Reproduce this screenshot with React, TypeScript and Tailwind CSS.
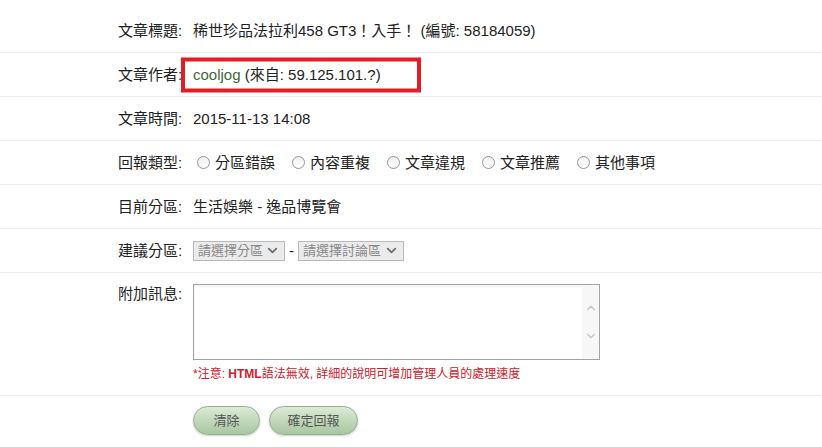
import React from "react";
import { ChevronDown, ChevronUp } from "lucide-react";

const font = "font-['Liberation_Sans','Noto_Sans_CJK_TC',sans-serif]";

const Row = ({
  label,
  children,
  top = false,
  className = "",
}: {
  label: string;
  children: React.ReactNode;
  top?: boolean;
  className?: string;
}) => (
  <div
    className={`flex border-b border-[#ebebeb] pl-[118px] ${
      top ? "items-start" : "items-center h-[44px]"
    } ${className}`}
  >
    <div className="w-[75px] shrink-0 leading-[20px] whitespace-nowrap">{label}</div>
    <div className="leading-[20px]">{children}</div>
  </div>
);

const Radio = ({ text, first = false }: { text: string; first?: boolean }) => (
  <label className={`flex items-center ${first ? "ml-[4px]" : "ml-[17px]"}`}>
    <span className="w-[13px] h-[13px] rounded-full border border-[#959595] bg-linear-to-b from-[#f0f0f0] to-white mr-[5px]" />
    <span>{text}</span>
  </label>
);

const FakeSelect = ({ text, width }: { text: string; width: string }) => (
  <div
    className={`${width} h-[20px] flex items-center justify-between border border-[#b9b9b9] bg-[#ebebeb] pl-[4px] pr-[4px] text-[13px] text-[#888]`}
  >
    <span>{text}</span>
    <ChevronDown size={15} strokeWidth={3} className="text-[#6f6f6f]" />
  </div>
);

const App = () => {
  const [message, setMessage] = React.useState("");

  return (
    <div className={`w-[822px] h-[447px] bg-white text-[15px] text-[#222] pt-[9px] ${font}`}>
      <Row label="文章標題:">稀世珍品法拉利458 GT3！入手！ (編號: 58184059)</Row>

      <Row label="文章作者:">
        <span className="relative inline-block">
          <span className="text-[#3b6a36]">cooljog</span> (來自: 59.125.101.?)
          <span className="absolute left-[-12px] top-1/2 -translate-y-1/2 h-[35px] w-[240px] border-[4px] border-[#e41c25]" />
        </span>
      </Row>

      <Row label="文章時間:">2015-11-13 14:08</Row>

      <Row label="回報類型:">
        <div className="flex items-center">
          <Radio text="分區錯誤" first />
          <Radio text="內容重複" />
          <Radio text="文章違規" />
          <Radio text="文章推薦" />
          <Radio text="其他事項" />
        </div>
      </Row>

      <Row label="目前分區:">生活娛樂 - 逸品博覽會</Row>

      <Row label="建議分區:">
        <div className="flex items-center">
          <FakeSelect text="請選擇分區" width="w-[92px]" />
          <span className="mx-[4px]">-</span>
          <FakeSelect text="請選擇討論區" width="w-[106px]" />
        </div>
      </Row>

      <Row label="附加訊息:" top className="pt-[11px] pb-[13px]">
        <div className="flex w-[407px] h-[76px] border border-[#a3a3a3] bg-white shadow-[inset_0_2px_3px_rgba(0,0,0,0.06)]">
          <textarea
            value={message}
            onChange={(e) => setMessage(e.target.value)}
            className="flex-1 resize-none outline-none bg-transparent px-[3px] py-[2px] text-[13px]"
          />
          <div className="w-[17px] bg-[#f7f7f7] flex flex-col items-center justify-center gap-[14px] text-[#c3c3c3]">
            <ChevronUp size={14} strokeWidth={2} />
            <ChevronDown size={14} strokeWidth={2} />
          </div>
        </div>
        <p className="mt-[6px] text-[12px] leading-[16px] text-[#d0202a]">
          *注意: <span className="font-bold">HTML</span>語法無效, 詳細的說明可增加管理人員的處理速度
        </p>
      </Row>

      <div className="flex gap-[9px] pl-[193px] pt-[10px]">
        <button className="w-[67px] h-[29px] rounded-full border border-[#93b08d] bg-linear-to-b from-[#dcebd6] to-[#a8c6a0] text-[13px] text-[#555] shadow-[0_1px_2px_rgba(0,0,0,0.2)]">
          清除
        </button>
        <button className="w-[89px] h-[29px] rounded-full border border-[#93b08d] bg-linear-to-b from-[#dcebd6] to-[#a8c6a0] text-[13px] text-[#555] shadow-[0_1px_2px_rgba(0,0,0,0.2)]">
          確定回報
        </button>
      </div>
    </div>
  );
};

export default App;
